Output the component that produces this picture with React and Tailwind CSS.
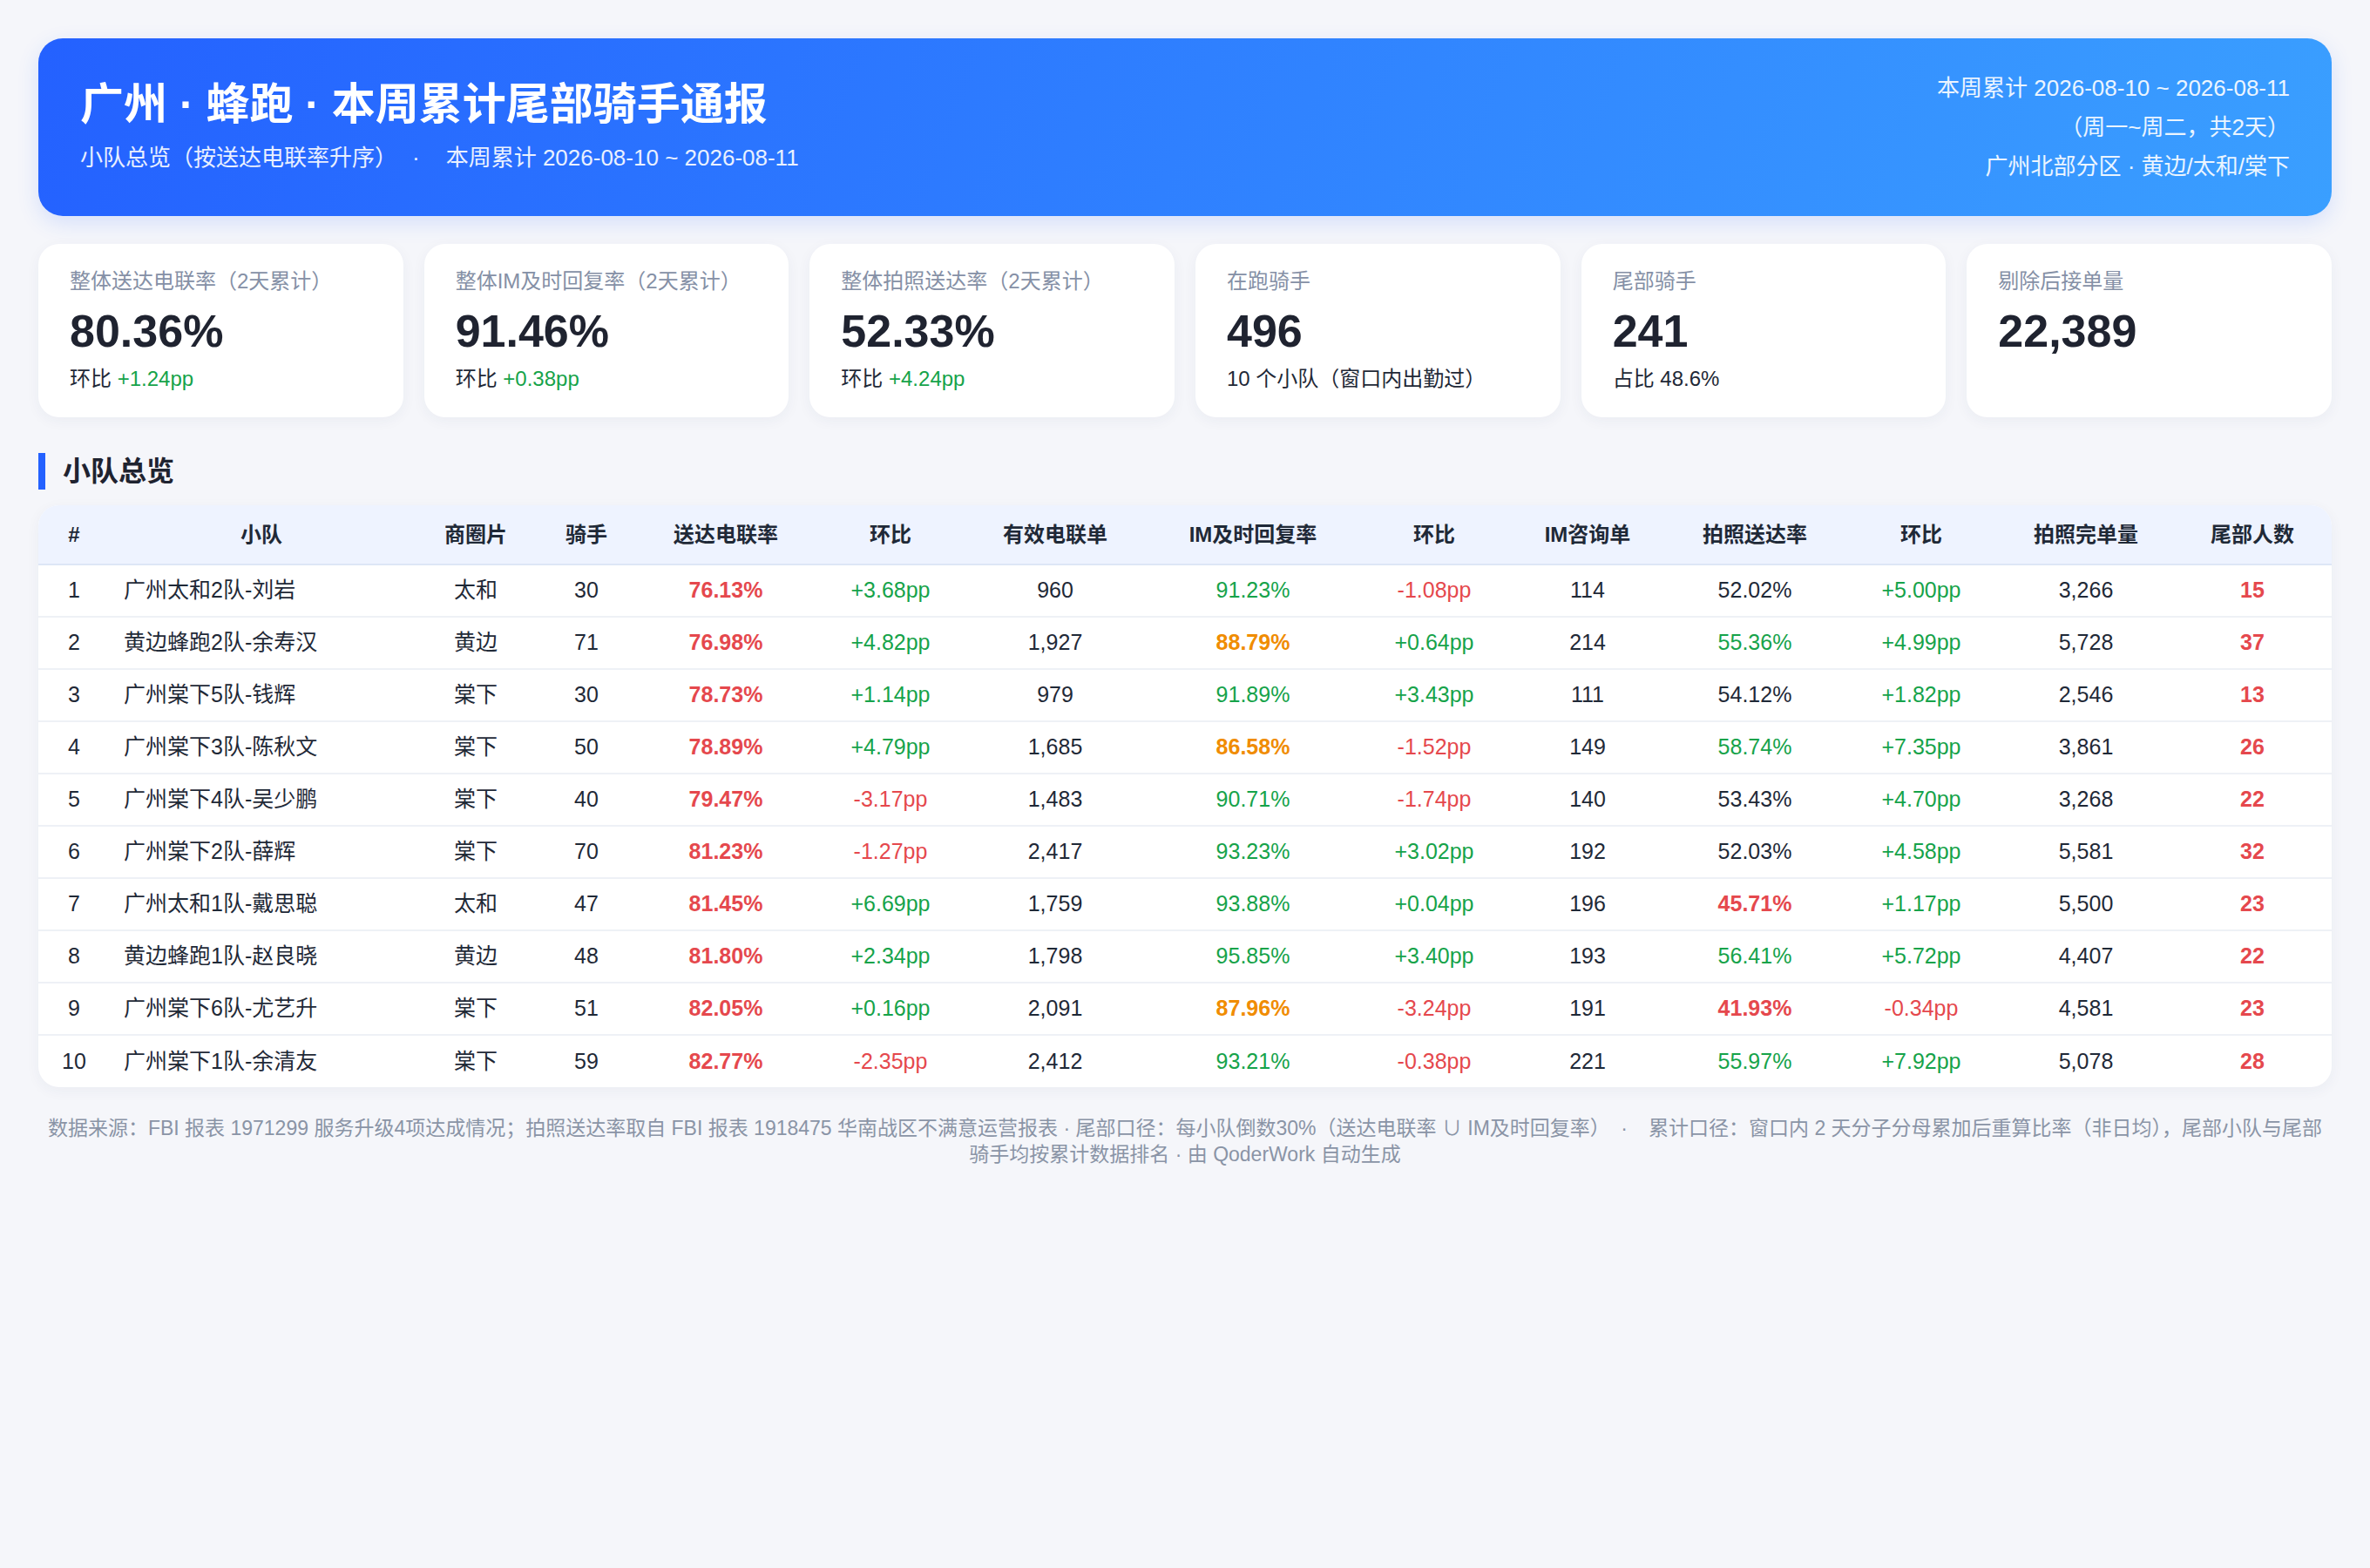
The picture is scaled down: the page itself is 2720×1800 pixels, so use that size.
import React from 'react';

const font = "font-['Liberation_Sans','Noto_Sans_CJK_SC',sans-serif]";

const stats = [
  { label: '整体送达电联率（2天累计）', value: '80.36%', prefix: '环比', delta: '+1.24pp' },
  { label: '整体IM及时回复率（2天累计）', value: '91.46%', prefix: '环比', delta: '+0.38pp' },
  { label: '整体拍照送达率（2天累计）', value: '52.33%', prefix: '环比', delta: '+4.24pp' },
  { label: '在跑骑手', value: '496', prefix: '10 个小队（窗口内出勤过）' },
  { label: '尾部骑手', value: '241', prefix: '占比 48.6%' },
  { label: '剔除后接单量', value: '22,389' },
];

const rows = [
  [1, '广州太和2队-刘岩', '太和', 30, '76.13%', '+3.68pp', '960', '91.23%', '-1.08pp', 114, '52.02%', '+5.00pp', '3,266', 15],
  [2, '黄边蜂跑2队-余寿汉', '黄边', 71, '76.98%', '+4.82pp', '1,927', '88.79%', '+0.64pp', 214, '55.36%', '+4.99pp', '5,728', 37],
  [3, '广州棠下5队-钱辉', '棠下', 30, '78.73%', '+1.14pp', '979', '91.89%', '+3.43pp', 111, '54.12%', '+1.82pp', '2,546', 13],
  [4, '广州棠下3队-陈秋文', '棠下', 50, '78.89%', '+4.79pp', '1,685', '86.58%', '-1.52pp', 149, '58.74%', '+7.35pp', '3,861', 26],
  [5, '广州棠下4队-吴少鹏', '棠下', 40, '79.47%', '-3.17pp', '1,483', '90.71%', '-1.74pp', 140, '53.43%', '+4.70pp', '3,268', 22],
  [6, '广州棠下2队-薛辉', '棠下', 70, '81.23%', '-1.27pp', '2,417', '93.23%', '+3.02pp', 192, '52.03%', '+4.58pp', '5,581', 32],
  [7, '广州太和1队-戴思聪', '太和', 47, '81.45%', '+6.69pp', '1,759', '93.88%', '+0.04pp', 196, '45.71%', '+1.17pp', '5,500', 23],
  [8, '黄边蜂跑1队-赵良晓', '黄边', 48, '81.80%', '+2.34pp', '1,798', '95.85%', '+3.40pp', 193, '56.41%', '+5.72pp', '4,407', 22],
  [9, '广州棠下6队-尤艺升', '棠下', 51, '82.05%', '+0.16pp', '2,091', '87.96%', '-3.24pp', 191, '41.93%', '-0.34pp', '4,581', 23],
  [10, '广州棠下1队-余清友', '棠下', 59, '82.77%', '-2.35pp', '2,412', '93.21%', '-0.38pp', 221, '55.97%', '+7.92pp', '5,078', 28],
];

const heads = ['#', '小队', '商圈片', '骑手', '送达电联率', '环比', '有效电联单', 'IM及时回复率', '环比', 'IM咨询单', '拍照送达率', '环比', '拍照完单量', '尾部人数'];
const widths = [82, 348, 144, 110, 210, 168, 210, 244, 172, 180, 204, 178, 200, 182];

const deltaCls = (d) => (d.startsWith('-') ? 'text-[#e5484d]' : 'text-[#16a34a]');
const imCls = (v) => (parseFloat(v) < 90 ? 'text-[#f08c00] font-bold' : 'text-[#16a34a]');
const photoCls = (v) => {
  const n = parseFloat(v);
  if (n < 50) return 'text-[#e5484d] font-bold';
  if (n >= 55) return 'text-[#16a34a]';
  return 'text-[#1f2937]';
};

const StatCard = ({ s }) => (
  <div className="bg-white rounded-[24px] px-[36px] pt-[25px] pb-[26px] shadow-[0_4px_16px_rgba(30,50,90,0.05)]">
    <div className="text-[24px] leading-[36px] text-[#8590a6]">{s.label}</div>
    <div className="mt-[9px] text-[52px] leading-[60px] font-bold text-[#1f2330]">{s.value}</div>
    {s.prefix && (
      <div className="mt-[7px] text-[24px] leading-[36px] text-[#1f2937]">
        {s.prefix}
        {s.delta && <span className="text-[#16a34a]"> {s.delta}</span>}
      </div>
    )}
  </div>
);

export default function App() {
  return (
    <div className={`min-h-screen bg-[#f5f6fa] p-[44px] ${font}`}>
      <div className="h-[204px] rounded-[28px] px-[48px] flex items-center justify-between text-white bg-[linear-gradient(110deg,#2461ff,#3a9fff)] shadow-[0_8px_24px_rgba(37,99,255,0.15)]">
        <div>
          <h1 className="text-[50px] leading-[62px] font-bold">广州 · 蜂跑 · 本周累计尾部骑手通报</h1>
          <div className="mt-[8px] text-[26px] leading-[44px] text-white/90">
            小队总览（按送达电联率升序）<span className="mx-[30px]">·</span>本周累计 2026-08-10 ~ 2026-08-11
          </div>
        </div>
        <div className="text-right text-[26px] leading-[45px] text-white/90">
          <div>本周累计 2026-08-10 ~ 2026-08-11</div>
          <div>（周一~周二，共2天）</div>
          <div>广州北部分区 · 黄边/太和/棠下</div>
        </div>
      </div>

      <div className="mt-[32px] grid grid-cols-6 gap-[24px]">
        {stats.map((s) => (
          <StatCard key={s.label} s={s} />
        ))}
      </div>

      <h2 className="mt-[41px] border-l-[8px] border-[#2461ff] pl-[20px] text-[32px] leading-[42px] font-bold text-[#1f2330]">小队总览</h2>

      <div className="mt-[18px] bg-white rounded-[24px] overflow-hidden shadow-[0_4px_16px_rgba(30,50,90,0.05)]">
        <table className="w-full table-fixed border-collapse">
          <colgroup>
            {widths.map((w, i) => (
              <col key={i} style={{ width: w }} />
            ))}
          </colgroup>
          <thead>
            <tr className="bg-[#eef3ff] border-b-2 border-[#dde6f6]">
              {heads.map((h, i) => (
                <th key={i} className="h-[68px] text-center text-[24px] font-bold text-[#1f2937]">{h}</th>
              ))}
            </tr>
          </thead>
          <tbody className="text-[25px] text-[#1f2937]">
            {rows.map((r, idx) => (
              <tr key={r[0]} className={idx < rows.length - 1 ? 'border-b-2 border-[#eef1f6]' : ''}>
                <td className="h-[60px] text-center">{r[0]}</td>
                <td className="pl-[16px] text-left">{r[1]}</td>
                <td className="text-center">{r[2]}</td>
                <td className="text-center">{r[3]}</td>
                <td className="text-center font-bold text-[#e5484d]">{r[4]}</td>
                <td className={`text-center ${deltaCls(r[5])}`}>{r[5]}</td>
                <td className="text-center">{r[6]}</td>
                <td className={`text-center ${imCls(r[7])}`}>{r[7]}</td>
                <td className={`text-center ${deltaCls(r[8])}`}>{r[8]}</td>
                <td className="text-center">{r[9]}</td>
                <td className={`text-center ${photoCls(r[10])}`}>{r[10]}</td>
                <td className={`text-center ${deltaCls(r[11])}`}>{r[11]}</td>
                <td className="text-center">{r[12]}</td>
                <td className="text-center font-bold text-[#e5484d]">{r[13]}</td>
              </tr>
            ))}
          </tbody>
        </table>
      </div>

      <p className="mt-[32px] text-center text-[23px] leading-[30px] text-[#8a94a6]">
        数据来源：FBI 报表 1971299 服务升级4项达成情况；拍照送达率取自 FBI 报表 1918475 华南战区不满意运营报表 · 尾部口径：每小队倒数30%（送达电联率 ∪ IM及时回复率）<span className="mx-[24px]">·</span>累计口径：窗口内 2 天分子分母累加后重算比率（非日均），尾部小队与尾部骑手均按累计数据排名 · 由 QoderWork 自动生成
      </p>
    </div>
  );
}
